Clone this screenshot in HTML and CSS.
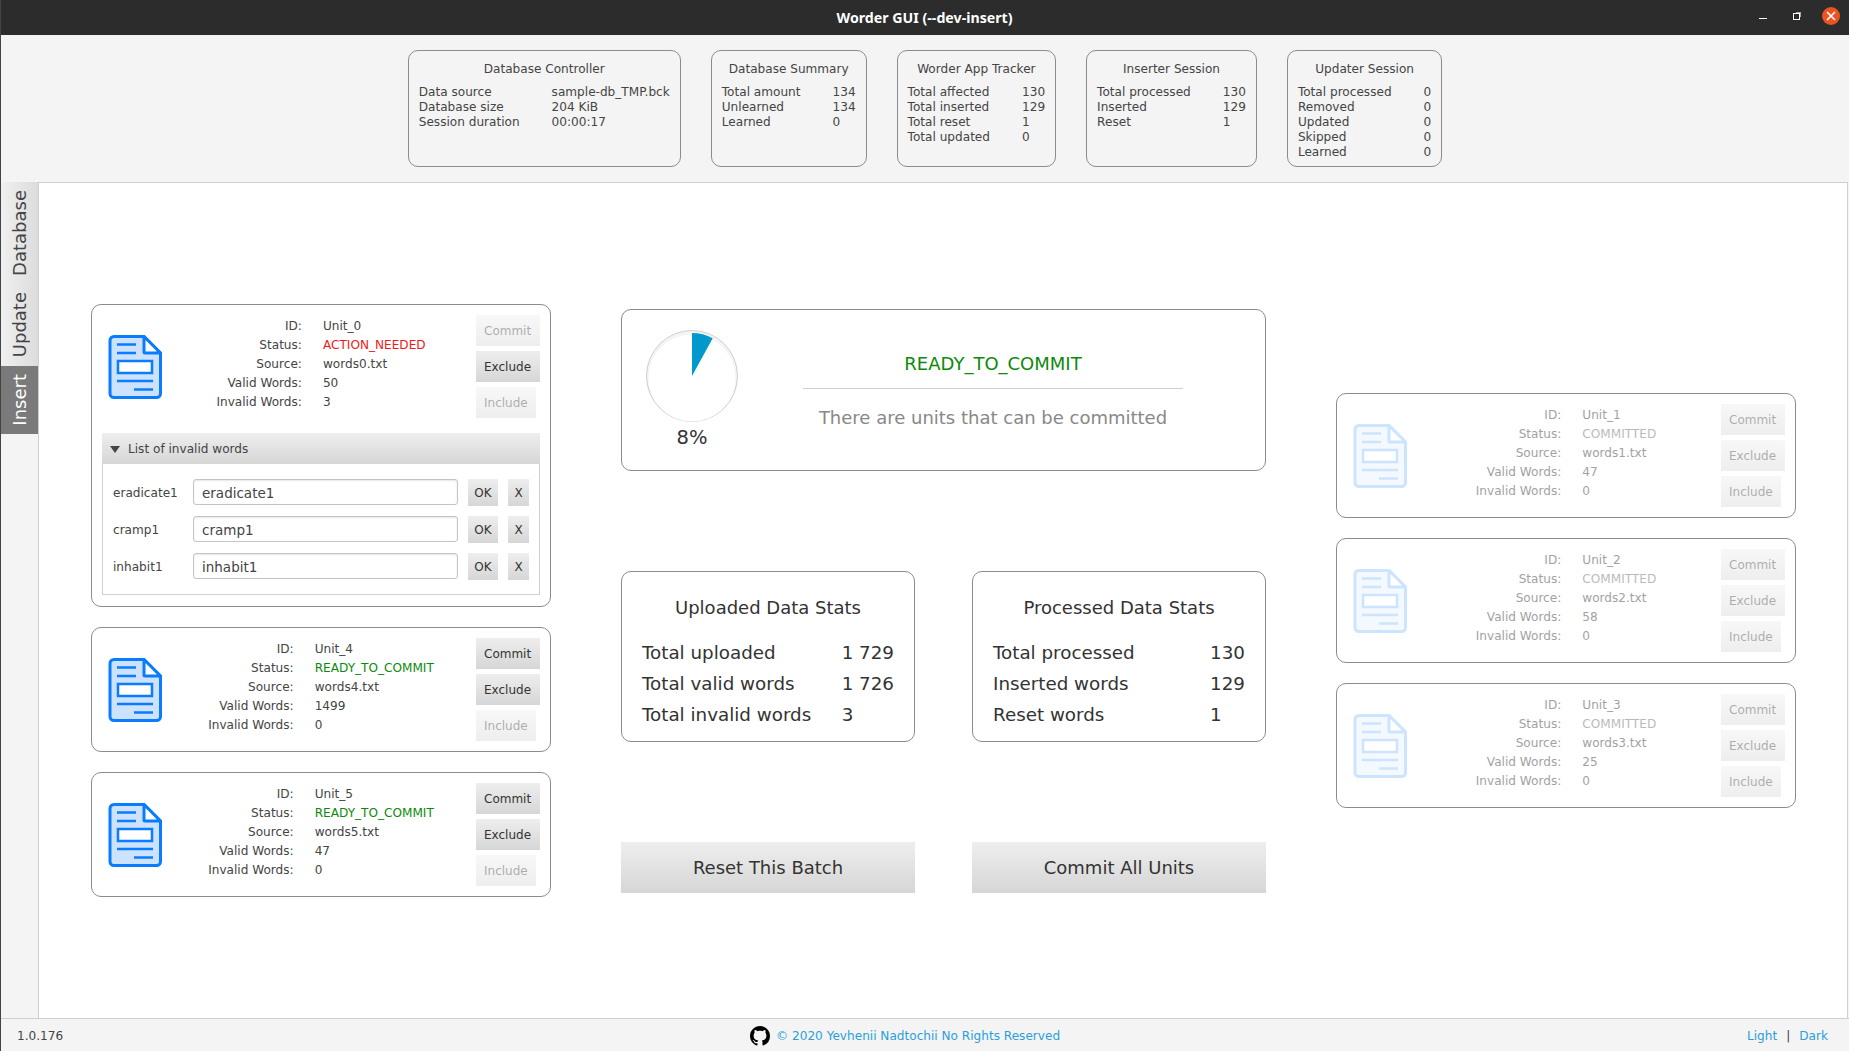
FILE: index.html
```html
<!DOCTYPE html>
<html lang="en">

<head>
    <meta charset="UTF-8">
    <meta name="viewport" content="width=device-width, initial-scale=1.0">
    <title>Worder GUI</title>
    <link rel="stylesheet" href="styles.css">
</head>

<body>
    <svg class="defs" width="0" height="0">
        <symbol id="doc" viewBox="0 0 54 64">
            <path class="doc-body" d="M6 1.5H36L52.5 18V58.5a4 4 0 0 1-4 4H6a4 4 0 0 1-4-4V5.5a4 4 0 0 1 4-4z" />
            <path class="doc-fold" d="M36 1.5V17a1 1 0 0 0 1 1H52.5z" />
            <path class="doc-line" d="M9 9.5H28M9 18H28M9 46H45M26 54.500H45" />
            <rect class="doc-box" x="10" y="26" width="34" height="12" />
        </symbol>
    </svg>

    <div class="titlebar">
        <span class="titlebar-name">Worder GUI (--dev-insert)</span>
        <div class="window-buttons">
            <span class="win-min"></span>
            <span class="win-max"></span>
            <span class="win-close">
                <svg width="10" height="10" viewBox="0 0 10 10">
                    <path d="M1 1L9 9M9 1L1 9" stroke="#fff" stroke-width="1.6" />
                </svg>
            </span>
        </div>
    </div>

    <div class="topbar">
        <div class="info-card">
            <div class="info-title">Database Controller</div>
            <div class="info-rows">
                <span>Data source</span><span>sample-db_TMP.bck</span>
                <span>Database size</span><span>204 KiB</span>
                <span>Session duration</span><span>00:00:17</span>
            </div>
        </div>
        <div class="info-card">
            <div class="info-title">Database Summary</div>
            <div class="info-rows">
                <span>Total amount</span><span>134</span>
                <span>Unlearned</span><span>134</span>
                <span>Learned</span><span>0</span>
            </div>
        </div>
        <div class="info-card">
            <div class="info-title">Worder App Tracker</div>
            <div class="info-rows">
                <span>Total affected</span><span>130</span>
                <span>Total inserted</span><span>129</span>
                <span>Total reset</span><span>1</span>
                <span>Total updated</span><span>0</span>
            </div>
        </div>
        <div class="info-card">
            <div class="info-title">Inserter Session</div>
            <div class="info-rows">
                <span>Total processed</span><span>130</span>
                <span>Inserted</span><span>129</span>
                <span>Reset</span><span>1</span>
            </div>
        </div>
        <div class="info-card">
            <div class="info-title">Updater Session</div>
            <div class="info-rows">
                <span>Total processed</span><span>0</span>
                <span>Removed</span><span>0</span>
                <span>Updated</span><span>0</span>
                <span>Skipped</span><span>0</span>
                <span>Learned</span><span>0</span>
            </div>
        </div>
    </div>

    <div class="workspace">
        <div class="tabs">
            <div class="tab tab-database"><span>Database</span></div>
            <div class="tab tab-update"><span>Update</span></div>
            <div class="tab tab-insert selected"><span>Insert</span></div>
        </div>

        <div class="main">
            <div class="unit-column">
                <div class="unit unit-open">
                    <div class="unit-head">
                        <svg class="doc-icon"><use href="#doc" /></svg>
                        <div class="unit-info">
                            <span class="key">ID:</span><span>Unit_0</span>
                            <span class="key">Status:</span><span class="status-red">ACTION_NEEDED</span>
                            <span class="key">Source:</span><span>words0.txt</span>
                            <span class="key">Valid Words:</span><span>50</span>
                            <span class="key">Invalid Words:</span><span>3</span>
                        </div>
                        <div class="unit-buttons">
                            <button class="off">Commit</button>
                            <button>Exclude</button>
                            <button class="off short">Include</button>
                        </div>
                    </div>
                    <div class="invalid-pane">
                        <div class="invalid-title"><span class="arrow"></span>List of invalid words</div>
                        <div class="invalid-list">
                            <div class="invalid-row">
                                <span class="word">eradicate1</span>
                                <input type="text" value="eradicate1">
                                <button class="ok">OK</button>
                                <button class="drop">X</button>
                            </div>
                            <div class="invalid-row">
                                <span class="word">cramp1</span>
                                <input type="text" value="cramp1">
                                <button class="ok">OK</button>
                                <button class="drop">X</button>
                            </div>
                            <div class="invalid-row">
                                <span class="word">inhabit1</span>
                                <input type="text" value="inhabit1">
                                <button class="ok">OK</button>
                                <button class="drop">X</button>
                            </div>
                        </div>
                    </div>
                </div>

                <div class="unit">
                    <div class="unit-head">
                        <svg class="doc-icon"><use href="#doc" /></svg>
                        <div class="unit-info">
                            <span class="key">ID:</span><span>Unit_4</span>
                            <span class="key">Status:</span><span class="status-green">READY_TO_COMMIT</span>
                            <span class="key">Source:</span><span>words4.txt</span>
                            <span class="key">Valid Words:</span><span>1499</span>
                            <span class="key">Invalid Words:</span><span>0</span>
                        </div>
                        <div class="unit-buttons">
                            <button>Commit</button>
                            <button>Exclude</button>
                            <button class="off short">Include</button>
                        </div>
                    </div>
                </div>

                <div class="unit">
                    <div class="unit-head">
                        <svg class="doc-icon"><use href="#doc" /></svg>
                        <div class="unit-info">
                            <span class="key">ID:</span><span>Unit_5</span>
                            <span class="key">Status:</span><span class="status-green">READY_TO_COMMIT</span>
                            <span class="key">Source:</span><span>words5.txt</span>
                            <span class="key">Valid Words:</span><span>47</span>
                            <span class="key">Invalid Words:</span><span>0</span>
                        </div>
                        <div class="unit-buttons">
                            <button>Commit</button>
                            <button>Exclude</button>
                            <button class="off short">Include</button>
                        </div>
                    </div>
                </div>
            </div>

            <div class="center-column">
                <div class="status-panel">
                    <div class="progress">
                        <svg class="pie" width="92" height="92" viewBox="0 0 92 92">
                            <circle cx="46" cy="46" r="45.500" fill="#f4f4f4" stroke="#cfcfcf" />
                            <circle cx="46" cy="48" r="43.500" fill="#fff" />
                            <path d="M46 46V3A43 43 0 0 1 66.700 8.300z" fill="#0099cc" />
                        </svg>
                        <div class="percent">8%</div>
                    </div>
                    <div class="status-text">
                        <div class="status-name">READY_TO_COMMIT</div>
                        <div class="status-note">There are units that can be committed</div>
                    </div>
                </div>

                <div class="stats">
                    <div class="stats-card">
                        <div class="stats-title">Uploaded Data Stats</div>
                        <div class="stats-rows">
                            <span>Total uploaded</span><span>1 729</span>
                            <span>Total valid words</span><span>1 726</span>
                            <span>Total invalid words</span><span>3</span>
                        </div>
                    </div>
                    <div class="stats-card">
                        <div class="stats-title">Processed Data Stats</div>
                        <div class="stats-rows">
                            <span>Total processed</span><span>130</span>
                            <span>Inserted words</span><span>129</span>
                            <span>Reset words</span><span>1</span>
                        </div>
                    </div>
                </div>

                <div class="stats">
                    <button class="big">Reset This Batch</button>
                    <button class="big">Commit All Units</button>
                </div>
            </div>

            <div class="unit-column">
                <div class="unit faded">
                    <div class="unit-head">
                        <svg class="doc-icon"><use href="#doc" /></svg>
                        <div class="unit-info">
                            <span class="key">ID:</span><span>Unit_1</span>
                            <span class="key">Status:</span><span class="status-done">COMMITTED</span>
                            <span class="key">Source:</span><span>words1.txt</span>
                            <span class="key">Valid Words:</span><span>47</span>
                            <span class="key">Invalid Words:</span><span>0</span>
                        </div>
                        <div class="unit-buttons">
                            <button>Commit</button>
                            <button>Exclude</button>
                            <button class="short">Include</button>
                        </div>
                    </div>
                </div>

                <div class="unit faded">
                    <div class="unit-head">
                        <svg class="doc-icon"><use href="#doc" /></svg>
                        <div class="unit-info">
                            <span class="key">ID:</span><span>Unit_2</span>
                            <span class="key">Status:</span><span class="status-done">COMMITTED</span>
                            <span class="key">Source:</span><span>words2.txt</span>
                            <span class="key">Valid Words:</span><span>58</span>
                            <span class="key">Invalid Words:</span><span>0</span>
                        </div>
                        <div class="unit-buttons">
                            <button>Commit</button>
                            <button>Exclude</button>
                            <button class="short">Include</button>
                        </div>
                    </div>
                </div>

                <div class="unit faded">
                    <div class="unit-head">
                        <svg class="doc-icon"><use href="#doc" /></svg>
                        <div class="unit-info">
                            <span class="key">ID:</span><span>Unit_3</span>
                            <span class="key">Status:</span><span class="status-done">COMMITTED</span>
                            <span class="key">Source:</span><span>words3.txt</span>
                            <span class="key">Valid Words:</span><span>25</span>
                            <span class="key">Invalid Words:</span><span>0</span>
                        </div>
                        <div class="unit-buttons">
                            <button>Commit</button>
                            <button>Exclude</button>
                            <button class="short">Include</button>
                        </div>
                    </div>
                </div>
            </div>
        </div>
    </div>

    <div class="footer">
        <span class="version">1.0.176</span>
        <div class="credit">
            <svg width="20" height="20" viewBox="0 0 16 16">
                <path fill="#000" d="M8 0C3.58 0 0 3.58 0 8c0 3.54 2.29 6.53 5.47 7.59.4.07.55-.17.55-.38 0-.19-.01-.82-.01-1.49-2.01.37-2.530-.49-2.690-.94-.09-.23-.48-.94-.82-1.130-.28-.15-.68-.52-.01-.53.63-.01 1.080.58 1.230.82.72 1.210 1.870.87 2.330.66.07-.52.28-.87.51-1.070-1.780-.2-3.640-.89-3.640-3.950 0-.87.31-1.590.82-2.150-.08-.2-.36-1.020.08-2.120 0 0 .67-.21 2.200.82.64-.18 1.320-.27 2-.27.68 0 1.360.09 2 .27 1.530-1.040 2.200-.82 2.200-.82.44 1.100.16 1.920.08 2.120.51.56.82 1.270.82 2.150 0 3.070-1.870 3.750-3.650 3.950.29.25.54.73.54 1.480 0 1.070-.01 1.930-.01 2.200 0 .21.15.46.55.38A8.013 8.013 0 0 0 16 8c0-4.420-3.580-8-8-8z" />
            </svg>
            <span class="link">© 2020 Yevhenii Nadtochii No Rights Reserved</span>
        </div>
        <div class="themes">
            <span class="link">Light</span>
            <span class="sep">|</span>
            <span class="link">Dark</span>
        </div>
    </div>
</body>

</html>
```

FILE: styles.css
```css
* {
    box-sizing: border-box;
}

body {
    margin: 0;
    width: 1849px;
    height: 1051px;
    display: flex;
    flex-direction: column;
    overflow: hidden;
    font-family: "DejaVu Sans", sans-serif;
    font-size: 12.1px;
    color: #444;
    background-color: #f4f4f4;
    border-left: 1px solid #444;
}

.defs {
    position: absolute;
}

button {
    font-family: inherit;
    font-size: 12px;
    color: #333;
    border: none;
    padding: 1px 0 0 0;
    background: linear-gradient(#eeeeee, #d6d6d6);
}

/* window title */
.titlebar {
    height: 35px;
    flex-shrink: 0;
    margin-left: -1px;
    display: flex;
    align-items: center;
    justify-content: center;
    position: relative;
    background-color: #2c2c2c;
}

.titlebar-name {
    color: #fff;
    font-family: "Noto Sans", sans-serif;
    font-weight: bold;
    font-size: 14.200px;
}

.window-buttons {
    position: absolute;
    right: 9px;
    top: 7px;
    display: flex;
    align-items: center;
    gap: 26px;
}

.win-min {
    width: 8px;
    height: 1px;
    margin-top: 4px;
    background-color: #fff;
}

.win-max {
    width: 7px;
    height: 7px;
    margin-right: -4px;
    border: 1px solid #fff;
    box-shadow: 2px -2px 0 -1px #aaa;
}

.win-close {
    width: 18px;
    height: 18px;
    border-radius: 50%;
    display: flex;
    align-items: center;
    justify-content: center;
    background-color: #e95420;
}

/* top info cards */
.topbar {
    height: 147px;
    flex-shrink: 0;
    padding-top: 15px;
    display: flex;
    justify-content: center;
    align-items: flex-start;
    gap: 30px;
}

.info-card {
    height: 117px;
    padding: 11px 10px;
    border: 1px solid #8c8c8c;
    border-radius: 10px;
}

.info-title {
    text-align: center;
    line-height: 15px;
    margin-bottom: 8px;
}

.info-rows {
    display: grid;
    grid-template-columns: auto auto;
    column-gap: 32px;
    line-height: 15px;
}

/* workspace */
.workspace {
    flex: 1;
    display: flex;
    min-height: 0;
}

.tabs {
    width: 37px;
    flex-shrink: 0;
}

.tab {
    display: flex;
    align-items: center;
    justify-content: center;
    font-size: 18px;
    color: #444;
    background: linear-gradient(to right, #f0f0f0, #dcdcdc);
}

.tab span {
    writing-mode: vertical-rl;
    transform: rotate(180deg);
}

.tab-database {
    height: 102px;
}

.tab-update {
    height: 82px;
}

.tab-insert {
    height: 68px;
}

.tab.selected {
    color: #fff;
    background: #7a7a7a;
}

.main {
    flex: 1;
    display: flex;
    justify-content: flex-start;
    align-items: center;
    gap: 70px;
    padding-left: 52px;
    background-color: #fff;
    border: 1px solid #cfcfcf;
    border-bottom: none;
    margin-right: 1px;
}

.unit-column {
    width: 460px;
    display: flex;
    flex-direction: column;
    gap: 20px;
}

.unit {
    height: 125px;
    padding: 10px 10px 0 16px;
    border: 1px solid #8c8c8c;
    border-radius: 10px;
}

.unit-open {
    height: 303px;
}

.unit-head {
    display: flex;
    align-items: flex-start;
}

.doc-icon {
    width: 54px;
    height: 64px;
    flex-shrink: 0;
    margin-top: 20px;
}

.doc-body {
    fill: #cce2ff;
    stroke: #0a7cff;
    stroke-width: 3;
}

.doc-fold {
    fill: #fff;
    stroke: #0a7cff;
    stroke-width: 3;
    stroke-linejoin: round;
}

.doc-line {
    fill: none;
    stroke: #0a7cff;
    stroke-width: 2.500;
}

.doc-box {
    fill: #fff;
    stroke: #0a7cff;
    stroke-width: 2.500;
}

.unit-info {
    flex: 1;
    margin-left: 4px;
    display: grid;
    grid-template-columns: auto auto;
    justify-content: center;
    column-gap: 21px;
    line-height: 19px;
    margin-top: 2px;
}

.key {
    text-align: right;
}

.status-red {
    color: #f01a1a;
}

.status-green {
    color: #0b8a0b;
}

.status-done {
    color: #777;
}

.unit-buttons {
    width: 64px;
    flex-shrink: 0;
    display: flex;
    flex-direction: column;
    align-items: flex-start;
    gap: 5px;
}

.unit-buttons button {
    width: 64px;
    height: 31px;
    text-align: left;
    padding-left: 8px;
}

.unit-buttons .short {
    width: 60px;
}

.off,
.faded .unit-buttons {
    opacity: 0.4;
}

.faded .unit-info {
    opacity: 0.5;
}

.faded .doc-icon {
    opacity: 0.2;
}

/* list of invalid words */
.invalid-pane {
    margin: 15px 0 0 -6px;
    width: 438px;
}

.invalid-title {
    height: 31px;
    padding: 1px 0 0 8px;
    display: flex;
    align-items: center;
    gap: 8px;
    background: linear-gradient(#eeeeee, #d6d6d6);
}

.arrow {
    border-left: 5px solid transparent;
    border-right: 5px solid transparent;
    border-top: 7px solid #444;
}

.invalid-list {
    height: 131px;
    padding: 15px 10px 0 10px;
    display: flex;
    flex-direction: column;
    gap: 10px;
    border: 1px solid #cfcfcf;
    border-top: none;
}

.invalid-row {
    display: flex;
    align-items: flex-start;
    height: 27px;
}

.word {
    width: 80px;
    line-height: 29px;
}

.invalid-row input {
    width: 265px;
    height: 26px;
    padding: 1px 8px 0 8px;
    font-family: inherit;
    font-size: 13.500px;
    color: #444;
    background-color: #fff;
    border: 1px solid #c4c4c4;
    border-radius: 3px;
    box-shadow: inset 0 1px 2px #e6e6e6;
}

.ok {
    width: 30px;
    height: 27px;
    margin-left: 10px;
}

.drop {
    width: 21px;
    height: 27px;
    margin-left: 10px;
}

/* centre */
.center-column {
    width: 645px;
    display: flex;
    flex-direction: column;
    gap: 100px;
}

.status-panel {
    height: 162px;
    padding: 20px 0 0 24px;
    display: flex;
    border: 1px solid #8c8c8c;
    border-radius: 10px;
}

.progress {
    width: 92px;
    text-align: center;
}

.pie {
    display: block;
}

.percent {
    font-size: 19.500px;
    line-height: 32px;
    color: #333;
}

.status-text {
    width: 380px;
    margin-left: 65px;
    text-align: center;
}

.status-name {
    height: 59px;
    padding-top: 23px;
    font-size: 18px;
    color: #0b8a0b;
    border-bottom: 1px solid #cfcfcf;
}

.status-note {
    padding-top: 18px;
    font-size: 18px;
    color: #888;
}

.stats {
    display: flex;
    gap: 57px;
}

.stats-card {
    width: 294px;
    height: 171px;
    padding: 25px 20px 0 20px;
    font-size: 18.300px;
    color: #333;
    border: 1px solid #8c8c8c;
    border-radius: 10px;
}

.stats-title {
    text-align: center;
    font-size: 18px;
    line-height: 22px;
    margin-bottom: 18px;
}

.stats-rows {
    display: grid;
    grid-template-columns: auto auto;
    justify-content: space-between;
    line-height: 31px;
}

.big {
    width: 294px;
    height: 51px;
    font-size: 18px;
}

/* footer */
.footer {
    height: 33px;
    flex-shrink: 0;
    padding: 2px 21px 0 16px;
    display: flex;
    justify-content: space-between;
    align-items: center;
    border-top: 1px solid #cfcfcf;
}

.credit {
    display: flex;
    align-items: center;
    gap: 6px;
}

.link {
    color: #2ba0d8;
}

.themes {
    display: flex;
    gap: 9px;
}
```
